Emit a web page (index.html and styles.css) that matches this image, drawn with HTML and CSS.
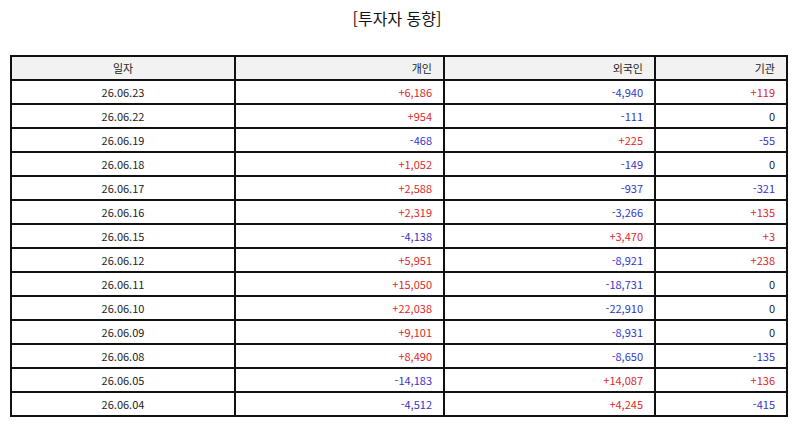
FILE: index.html
```html
<!DOCTYPE html>
<html lang="ko">
<head>
<meta charset="utf-8">
<link rel="stylesheet" href="styles.css">
</head>
<body>
<div class="page">
  <h1 class="title">[투자자 동향]</h1>
  <table class="grid">
    <colgroup>
      <col class="c-date"><col class="c-ind"><col class="c-for"><col class="c-inst">
    </colgroup>
    <thead>
      <tr><th class="center">일자</th><th>개인</th><th>외국인</th><th>기관</th></tr>
    </thead>
    <tbody>
      <tr><td class="center">26.06.23</td><td class="up">+6,186</td><td class="down">-4,940</td><td class="up">+119</td></tr>
      <tr><td class="center">26.06.22</td><td class="up">+954</td><td class="down">-111</td><td>0</td></tr>
      <tr><td class="center">26.06.19</td><td class="down">-468</td><td class="up">+225</td><td class="down">-55</td></tr>
      <tr><td class="center">26.06.18</td><td class="up">+1,052</td><td class="down">-149</td><td>0</td></tr>
      <tr><td class="center">26.06.17</td><td class="up">+2,588</td><td class="down">-937</td><td class="down">-321</td></tr>
      <tr><td class="center">26.06.16</td><td class="up">+2,319</td><td class="down">-3,266</td><td class="up">+135</td></tr>
      <tr><td class="center">26.06.15</td><td class="down">-4,138</td><td class="up">+3,470</td><td class="up">+3</td></tr>
      <tr><td class="center">26.06.12</td><td class="up">+5,951</td><td class="down">-8,921</td><td class="up">+238</td></tr>
      <tr><td class="center">26.06.11</td><td class="up">+15,050</td><td class="down">-18,731</td><td>0</td></tr>
      <tr><td class="center">26.06.10</td><td class="up">+22,038</td><td class="down">-22,910</td><td>0</td></tr>
      <tr><td class="center">26.06.09</td><td class="up">+9,101</td><td class="down">-8,931</td><td>0</td></tr>
      <tr><td class="center">26.06.08</td><td class="up">+8,490</td><td class="down">-8,650</td><td class="down">-135</td></tr>
      <tr><td class="center">26.06.05</td><td class="down">-14,183</td><td class="up">+14,087</td><td class="up">+136</td></tr>
      <tr><td class="center">26.06.04</td><td class="down">-4,512</td><td class="up">+4,245</td><td class="down">-415</td></tr>
    </tbody>
  </table>
</div>
</body>
</html>
```
FILE: styles.css
```css
html, body {
  margin: 0;
  padding: 0;
  background: #fff;
}
.page {
  width: 794px;
  font-family: "Noto Sans CJK KR", "Noto Sans", sans-serif;
  color: #222;
}
.title {
  margin: 0;
  height: 55px;
  box-sizing: border-box;
  padding-top: 6px;
  text-align: center;
  font-size: 16px;
  font-weight: 400;
  line-height: 24px;
  color: #111;
}
.grid {
  margin-left: 10px;
  width: 776px;
  border-collapse: collapse;
  table-layout: fixed;
  font-size: 11px;
}
.c-date { width: 224px; }
.c-ind { width: 209px; }
.c-for { width: 211px; }
.c-inst { width: 132px; }
.grid tr {
  height: 24px;
}
.grid th, .grid td {
  border: 2px solid #111;
  padding: 0 11px 0 6px;
  text-align: right;
  font-weight: 400;
  line-height: 14px;
}
.grid th {
  background: #f2f2f2;
}
.grid .center {
  text-align: center;
  padding: 0;
}
.up { color: #e0262b; }
.down { color: #3434c8; }
```
